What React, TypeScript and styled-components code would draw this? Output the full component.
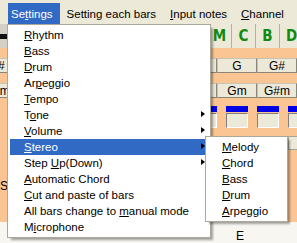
import { createGlobalStyle, styled } from "styled-components";

const GlobalStyle = createGlobalStyle`
  html, body {
    margin: 0;
    padding: 0;
  }
  body {
    font-family: "Liberation Sans", Arial, sans-serif;
    font-size: 11.5px;
  }
`;

const Window = styled.div`
  position: relative;
  width: 297px;
  height: 243px;
  overflow: hidden;
  background: #fac592;
  display: flex;
  flex-direction: column;
`;

const MenuBar = styled.div`
  height: 24px;
  display: flex;
  align-items: flex-end;
  gap: 4px;
  padding-left: 8px;
  background: #ece9d8;
  flex-shrink: 0;
`;

const MenuTitle = styled.div<{ $open?: boolean }>`
  height: 21px;
  padding: 0 7px 0 3px;
  display: flex;
  align-items: center;
  white-space: nowrap;
  background: ${(p) => (p.$open ? "#316ac5" : "transparent")};
  color: ${(p) => (p.$open ? "#ffffff" : "#000000")};
`;

const Toolbar = styled.div`
  height: 24px;
  display: flex;
  background: #d4d0c8;
  flex-shrink: 0;
`;

const Display = styled.div`
  width: 207px;
  flex-shrink: 0;
  display: flex;
  align-items: center;
  &::before {
    content: "";
    display: block;
    width: 100%;
    height: 5px;
    background: #111;
  }
`;

const PartButton = styled.div`
  width: 24px;
  flex-shrink: 0;
  height: 100%;
  display: flex;
  align-items: center;
  justify-content: center;
  background: #ece9d8;
  border-left: 1px solid #b5b1a2;
  box-sizing: border-box;
  color: #108a10;
  font-family: "DejaVu Sans Condensed", "DejaVu Sans", sans-serif;
  font-weight: bold;
  font-size: 15px;
`;

const Gap = styled.div<{ $h: number }>`
  height: ${(p) => p.$h}px;
  flex-shrink: 0;
`;

const ChordRow = styled.div`
  height: 15px;
  display: flex;
  margin-left: -23px;
  flex-shrink: 0;
`;

const ChordButton = styled.div`
  width: 40px;
  flex-shrink: 0;
  height: 100%;
  box-sizing: border-box;
  background: #ece9d8;
  border: 1px solid #c8c4b4;
  border-right-color: #8a8778;
  border-bottom-color: #8a8778;
  display: flex;
  align-items: center;
  justify-content: center;
  font-size: 12px;
`;

const SliderRow = styled.div`
  height: 22px;
  display: flex;
  gap: 9px;
  margin-left: 9px;
  flex-shrink: 0;
`;

const SliderCell = styled.div`
  width: 22px;
  flex-shrink: 0;
  display: flex;
  flex-direction: column;
  gap: 1px;
`;

const Level = styled.div`
  height: 6px;
  background: #0000e8;
`;

const ValueBox = styled.div`
  flex: 1;
  background: #ece9d8;
  border: 1px solid #ffffff;
  border-top-color: #808080;
  border-left-color: #808080;
`;

const BoxRow = styled.div`
  height: 14px;
  display: flex;
  gap: 9px;
  margin-left: 9px;
  flex-shrink: 0;
`;

const GrayBox = styled.div`
  width: 22px;
  flex-shrink: 0;
  background: #ece9d8;
  border: 1px solid #a8a498;
  box-sizing: border-box;
`;

const SideLabel = styled.div`
  height: 72px;
  display: flex;
  align-items: center;
  font-size: 12px;
  flex-shrink: 0;
`;

const NoteStrip = styled.div`
  flex: 1;
  background: #f7f6f1;
  display: flex;
  align-items: flex-end;
  padding-left: 236px;
  font-size: 12px;
`;

const Menu = styled.div<{ $left: number; $top: number; $width: number }>`
  position: absolute;
  left: ${(p) => p.$left}px;
  top: ${(p) => p.$top}px;
  width: ${(p) => p.$width}px;
  box-sizing: border-box;
  padding: 2px;
  background: #ffffff;
  border: 1px solid #aca899;
  box-shadow: 3px 3px 2px -1px rgba(0, 0, 0, 0.35);
`;

const Item = styled.div<{ $active?: boolean; $pad: number }>`
  position: relative;
  height: 16px;
  display: flex;
  align-items: center;
  padding-left: ${(p) => p.$pad}px;
  white-space: nowrap;
  background: ${(p) => (p.$active ? "#316ac5" : "transparent")};
  color: ${(p) => (p.$active ? "#ffffff" : "#000000")};
`;

const Arrow = styled.span`
  position: absolute;
  right: 3px;
  top: 4px;
  width: 0;
  height: 0;
  border-top: 3.5px solid transparent;
  border-bottom: 3.5px solid transparent;
  border-left: 4px solid #000;
`;

const Key = styled.span`
  text-decoration: underline;
  text-underline-offset: 1px;
`;

type Entry = { pre?: string; key: string; post?: string; sub?: boolean };

const mainItems: Entry[] = [
  { key: "R", post: "hythm" },
  { key: "B", post: "ass" },
  { key: "D", post: "rum" },
  { pre: "Ar", key: "p", post: "eggio" },
  { key: "T", post: "empo" },
  { pre: "T", key: "o", post: "ne", sub: true },
  { key: "V", post: "olume", sub: true },
  { key: "S", post: "tereo", sub: true },
  { pre: "Step ", key: "U", post: "p(Down)", sub: true },
  { key: "A", post: "utomatic Chord" },
  { key: "C", post: "ut and paste of bars" },
  { pre: "All bars change to ", key: "m", post: "anual mode" },
  { pre: "M", key: "i", post: "crophone" },
];

const subItems: Entry[] = [
  { key: "M", post: "elody" },
  { key: "C", post: "hord" },
  { key: "B", post: "ass" },
  { key: "D", post: "rum" },
  { key: "A", post: "rpeggio" },
];

const majors = ["C#", "D", "D#", "E", "F", "F#", "G", "G#"];

function Label({ e }: { e: Entry }) {
  return (
    <span>
      {e.pre}
      <Key>{e.key}</Key>
      {e.post}
    </span>
  );
}

export default function App() {
  const cols = Array.from({ length: 10 });
  return (
    <Window>
      <GlobalStyle />
      <MenuBar>
        <MenuTitle $open>
          <Label e={{ pre: "Se", key: "t", post: "tings" }} />
        </MenuTitle>
        <MenuTitle>
          <Label e={{ pre: "Settin", key: "g", post: " each bars" }} />
        </MenuTitle>
        <MenuTitle>
          <Label e={{ key: "I", post: "nput notes" }} />
        </MenuTitle>
        <MenuTitle>
          <Label e={{ key: "C", post: "hannel" }} />
        </MenuTitle>
      </MenuBar>
      <Toolbar>
        <Display />
        {["M", "C", "B", "D"].map((p) => (
          <PartButton key={p}>{p}</PartButton>
        ))}
      </Toolbar>
      <Gap $h={10} />
      <ChordRow>
        {majors.map((c) => (
          <ChordButton key={c}>{c}</ChordButton>
        ))}
      </ChordRow>
      <Gap $h={10} />
      <ChordRow>
        {majors.map((c) => (
          <ChordButton key={c}>{c + "m"}</ChordButton>
        ))}
      </ChordRow>
      <Gap $h={8} />
      <SliderRow>
        {cols.map((_, i) => (
          <SliderCell key={i}>
            <Level />
            <ValueBox />
          </SliderCell>
        ))}
      </SliderRow>
      <Gap $h={8} />
      <BoxRow>
        {cols.map((_, i) => (
          <GrayBox key={i} />
        ))}
      </BoxRow>
      <SideLabel>S</SideLabel>
      <NoteStrip>E</NoteStrip>

      <Menu $left={7} $top={24} $width={204}>
        {mainItems.map((e, i) => (
          <Item key={i} $pad={14} $active={i === 7}>
            <Label e={e} />
            {e.sub && <Arrow />}
          </Item>
        ))}
      </Menu>
      <Menu $left={205} $top={136} $width={83}>
        {subItems.map((e, i) => (
          <Item key={i} $pad={14}>
            <Label e={e} />
          </Item>
        ))}
      </Menu>
    </Window>
  );
}
